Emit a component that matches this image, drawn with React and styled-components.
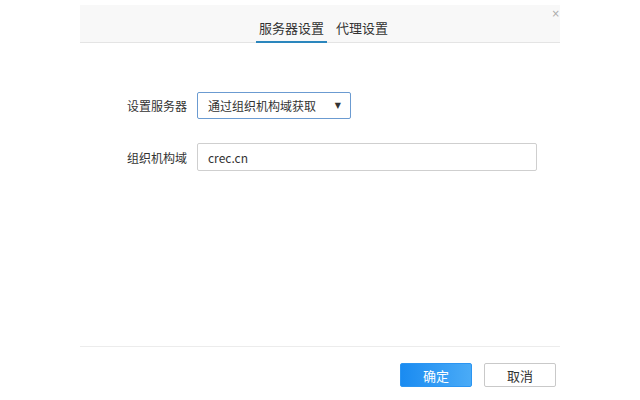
import React from 'react';
import styled, { createGlobalStyle } from 'styled-components';

const GlobalStyle = createGlobalStyle`
  html, body {
    margin: 0;
    padding: 0;
    background: #fff;
  }
  body {
    font-family: "Noto Sans CJK SC", "Noto Sans", sans-serif;
    color: #333;
  }
`;

const Dialog = styled.div`
  position: relative;
  display: flex;
  flex-direction: column;
  width: 480px;
  height: 395px;
  margin: 5px 0 0 80px;
  overflow: hidden;
`;

const Header = styled.div`
  display: flex;
  justify-content: center;
  height: 38px;
  padding-left: 7px;
  box-sizing: border-box;
  background: #f8f8f8;
  border-bottom: 1px solid #e4e4e4;
`;

const Tab = styled.div`
  display: flex;
  align-items: center;
  padding: 8px 3px 0;
  margin: 0 3px -1px;
  font-size: 13px;
  color: #333;
  border-bottom: 2px solid ${(p) => (p.$active ? '#2b86bd' : 'transparent')};
`;

const Close = styled.span`
  position: absolute;
  top: 3px;
  right: 0;
  font-size: 10px;
  line-height: 12px;
  color: #aaa;
  font-family: "DejaVu Sans", sans-serif;
`;

const Body = styled.div`
  flex: 1;
  padding: 49px 0 0 47px;
`;

const Form = styled.div`
  display: grid;
  grid-template-columns: 60px auto;
  column-gap: 10px;
  row-gap: 24px;
  align-items: center;
`;

const Label = styled.div`
  font-size: 12px;
  color: #333;
  white-space: nowrap;
`;

const Select = styled.div`
  display: flex;
  align-items: center;
  justify-content: space-between;
  width: 154px;
  height: 27px;
  box-sizing: border-box;
  padding: 0 9px 0 10px;
  border: 1px solid #6b9bd1;
  border-radius: 2px;
  font-size: 12px;
  color: #333;
`;

const Arrow = styled.span`
  font-size: 8px;
  color: #333;
  font-family: "DejaVu Sans", sans-serif;
`;

const Input = styled.div`
  display: flex;
  align-items: center;
  width: 340px;
  height: 28px;
  box-sizing: border-box;
  padding: 0 10px;
  border: 1px solid #cfcfcf;
  border-radius: 2px;
  font-size: 12px;
  color: #333;
`;

const Footer = styled.div`
  display: flex;
  justify-content: flex-end;
  gap: 12px;
  height: 54px;
  box-sizing: border-box;
  padding: 16px 4px 0 0;
  border-top: 1px solid #ececec;
`;

const Button = styled.div`
  display: flex;
  align-items: center;
  justify-content: center;
  width: 72px;
  height: 24px;
  box-sizing: border-box;
  border-radius: 2px;
  font-size: 13px;
  color: ${(p) => (p.$primary ? '#fff' : '#333')};
  background: ${(p) =>
    p.$primary ? 'linear-gradient(to right, #1a8bf1, #4aabf7)' : '#fff'};
  border: 1px solid ${(p) => (p.$primary ? '#2b95f2' : '#c9c9c9')};
`;

const App = () => {
  return (
    <>
      <GlobalStyle />
      <Dialog>
        <Header>
          <Tab $active>服务器设置</Tab>
          <Tab>代理设置</Tab>
        </Header>
        <Close>×</Close>
        <Body>
          <Form>
            <Label>设置服务器</Label>
            <Select>
              <span>通过组织机构域获取</span>
              <Arrow>▼</Arrow>
            </Select>
            <Label>组织机构域</Label>
            <Input>crec.cn</Input>
          </Form>
        </Body>
        <Footer>
          <Button $primary>确定</Button>
          <Button>取消</Button>
        </Footer>
      </Dialog>
    </>
  );
};

export default App;
